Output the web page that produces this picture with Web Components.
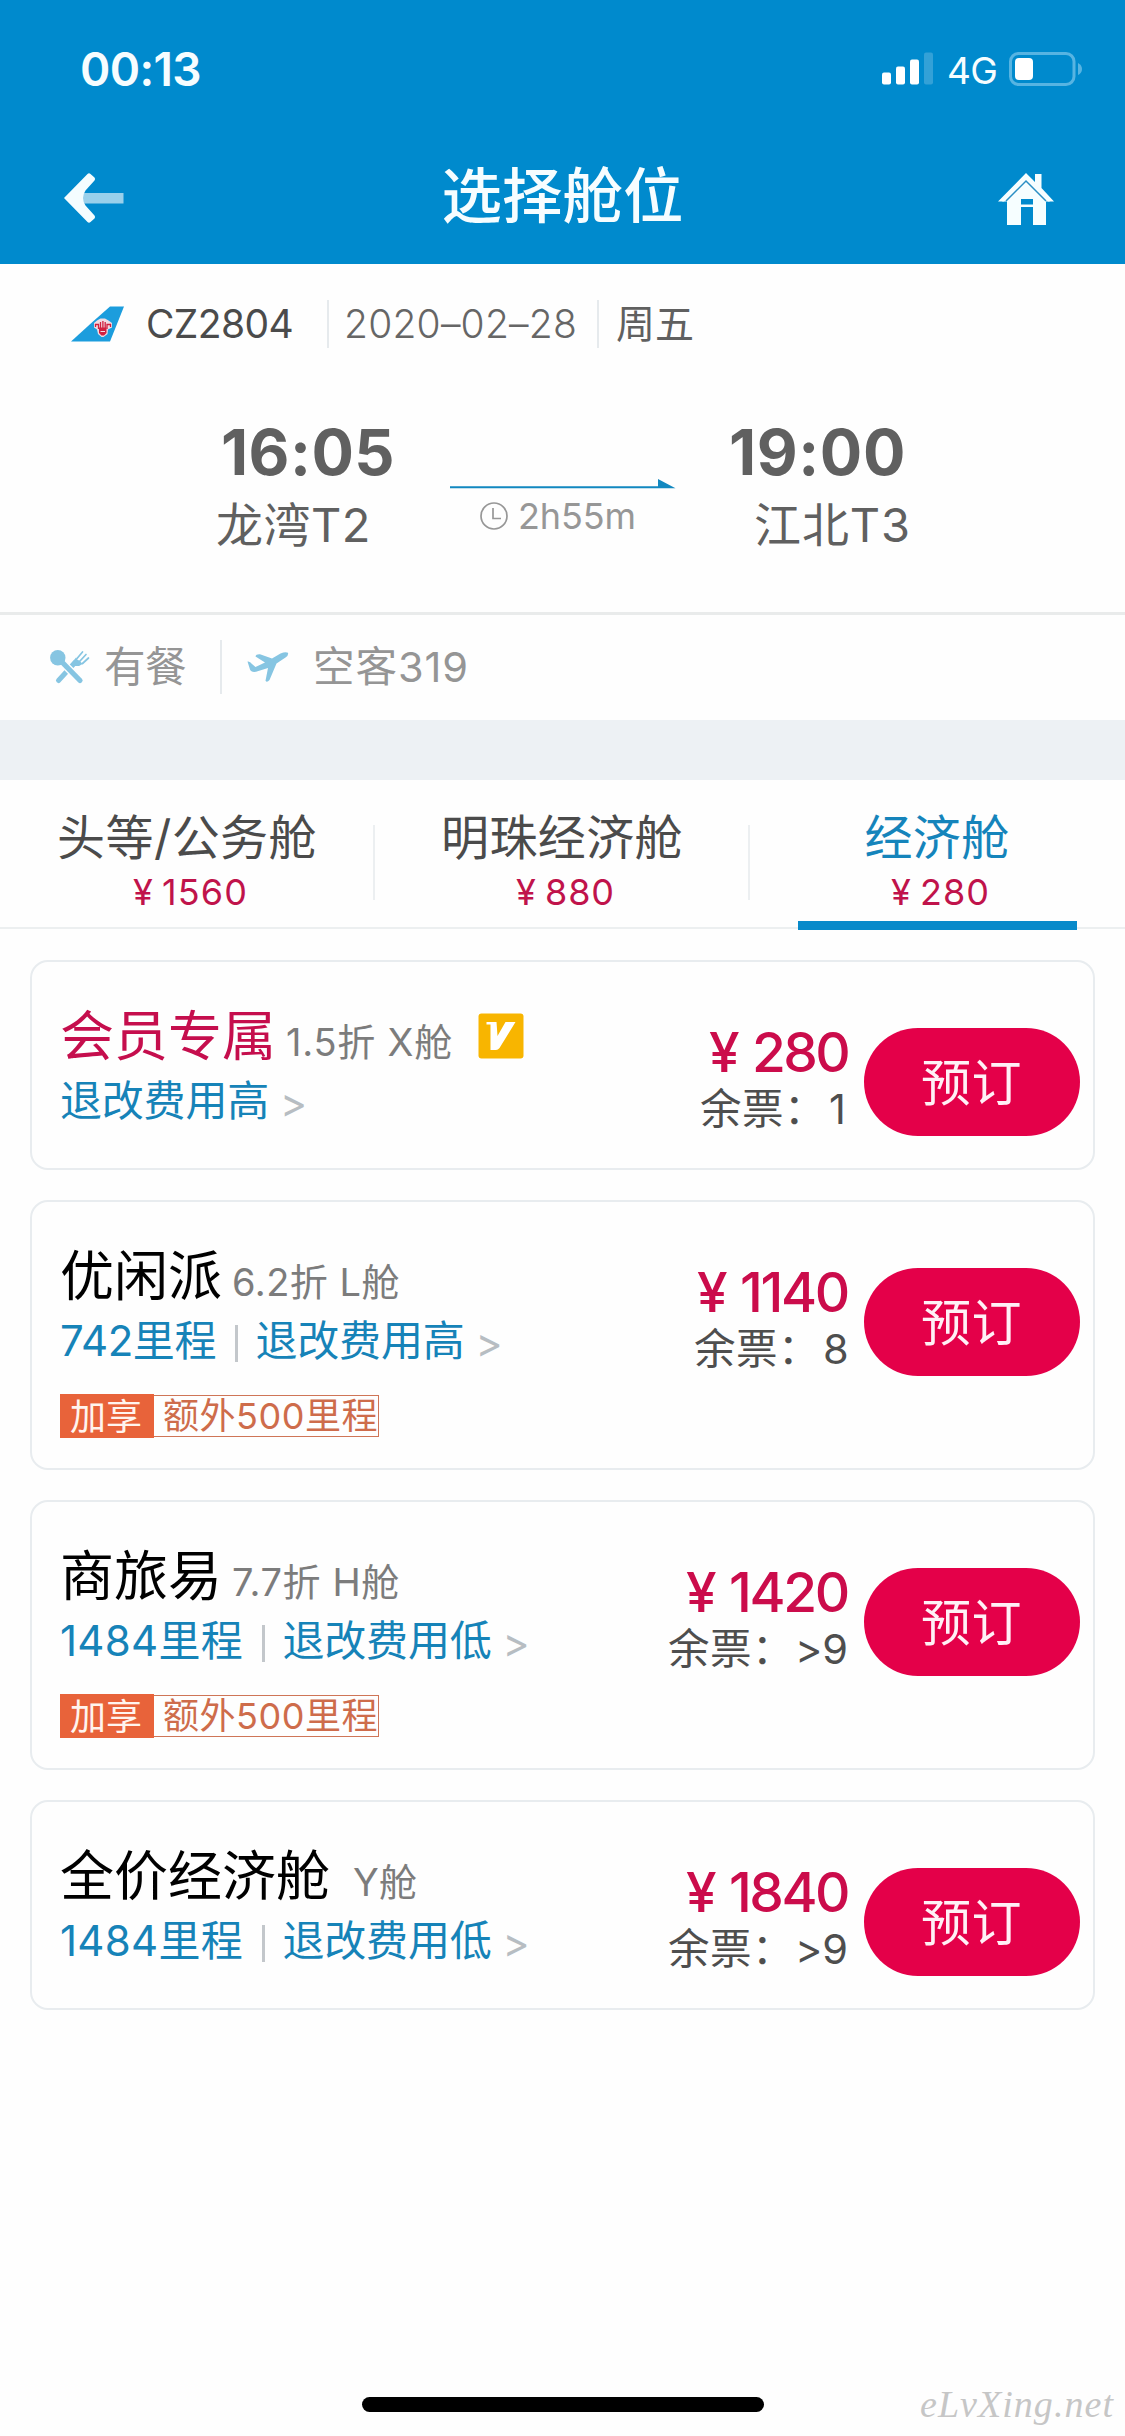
<!DOCTYPE html>
<html lang="zh-CN">
<head>
<meta charset="utf-8">
<meta name="viewport" content="width=1125">
<title>选择舱位</title>
<style>
  html, body { margin: 0; background: #fefefe; }
  body { width: 1125px; height: 2436px; overflow: hidden; font-family: Inter, "Noto Sans CJK SC", sans-serif; }
</style>
</head>
<body>
<cabin-page></cabin-page>
<script>
const define = (name, html, setup) => {
  const tpl = document.createElement('template');
  tpl.innerHTML = html;
  customElements.define(name, class extends HTMLElement {
    constructor() {
      super();
      this.attachShadow({ mode: 'open' }).appendChild(tpl.content.cloneNode(true));
    }
    connectedCallback() { if (setup && !this.ready) { this.ready = true; setup(this, this.shadowRoot); } }
  });
};

/* A single-line label that spreads its letters over the width given in "w". */
define('fit-label', `<style>:host{display:flex;flex:none} span{flex:none;white-space:pre}</style><span></span>`, (el, root) => {
  const s = root.querySelector('span');
  s.textContent = el.getAttribute('t');
  const w = +el.getAttribute('w');
  if (w) {
    const natural = s.getBoundingClientRect().width;
    s.style.letterSpacing = (w - natural) / [...s.textContent].length + 'px';
    el.style.width = w + 'px';
  }
});

const ICONS = {
  back: ['0 0 60 50', 60, 50, `<path d="M19 20H59.5V30.5H19Z" fill="#fff" fill-opacity=".6"/><path d="M0 25 23.500 1Q25-.4 26.500 1L30.500 4.600Q31.800 6 30.500 7.400L21.500 17.500Q16.500 25 21.500 32.500L30.500 42.600Q31.800 44 30.500 45.400L26.500 49Q25 50.400 23.500 49Z" fill="#f4fdff"/>`],
  home: ['0 0 58 54', 58, 54, `<g fill="#f6feff"><path d="M29 1 38 10V2H44.500V16L57 29.500H51L29 7.500 7 29.500H1Z"/><path d="M29 4.500 53 29.500H5Z"/><path d="M10 28 29 9 49 28V53H36V35H24V53H10Z"/></g><path d="M9 29 29 9 49 29" fill="none" stroke="#2b8fc4" stroke-width="1.500"/><path d="M24 27H36V32.500H24Z" fill="#008acd"/>`],
  signal: ['0 0 52 34', 52, 34, `<g fill="#fff"><rect y="20.500" width="9" height="12" rx="2"/><rect x="14" y="14.500" width="9" height="18" rx="2"/><rect x="28" y="7.500" width="9" height="25" rx="2"/><rect x="42" y=".5" width="9" height="32" rx="2" opacity=".2"/></g>`],
  battery: ['0 0 74 34', 74, 34, `<rect x="1.500" y="1.500" width="63.500" height="31" rx="8" fill="none" stroke="#57b4e2" stroke-width="3"/><rect x="6" y="6" width="18" height="22" rx="4" fill="#fff"/><path d="M69 11Q73 13 73 17T69 23Z" fill="#57b4e2"/>`],
  tail: ['0 0 54 36', 54, 36, `<path d="M0 35.500 22 15.500 39 .5H53L39 35.500Z" fill="#1c9ddd"/><path d="M23 17 26 14.500 29.500 12.500H34L37.500 14.500 41 17V21.500L37 23.500 36.500 28 32.500 31H30.500L27 28 26 23.500 23 21.500Z" fill="#f0dbe2"/><path d="M24.500 21V18.500H27.500V23M39.500 21V18.500H36V23M29.500 25V16M31.900 26V15M34.200 25V16" fill="none" stroke="#d2203f" stroke-width="1.300"/><path d="M28 21.500H35.500V27L33 29.500H30.500L28 27Z" fill="#d2203f"/><path d="M29.500 25.500H34" stroke="#f0dbe2"/>`],
  clock: ['0 0 28 28', 28, 28, `<g fill="none" stroke="#979797" stroke-width="1.700"><circle cx="14" cy="14" r="13"/><path d="M13 6V16.500H21"/></g>`],
  meal: ['0 0 40 34', 40, 34, `<g fill="none" stroke="#86c5e2" stroke-linecap="round"><path d="M8.500 30.500 25 12.500" stroke-width="5"/><path d="M27 8.500 32.500 2M30 11 36 4.500M32.500 13.500 38.500 8" stroke-width="1.700"/><path d="M22.500 12 26 7.500Q27 10 29.500 10.500 31 13 33.500 13.500L29 16 24.500 16Z" fill="#86c5e2" stroke="none"/><path d="M9 9 30 30.500" stroke="#fefefe" stroke-width="8"/><path d="M9 9 30 30.500" stroke-width="5.200"/></g><circle cx="7.800" cy="7.800" r="7.700" fill="#86c5e2"/>`],
  plane: ['0 0 42 30', 42, 30, `<path d="M.5 9.500Q3 9 5 12L8.500 15 18 10.500 8.500 4.500Q9 2 13 2.300L25 6.500 33.500 1.500Q38.500-.7 41 .7 41.700 3.500 38.500 5.500L29.500 11.500 22.500 28Q20 31 18.500 28.800L21 16 9 19.800Q4 20.500 3 17.500Z" fill="#86c5e2"/>`],
  arrow: ['0 0 226 10', 226, 10, `<path d="M0 7.200H208V0L225.500 9.200H0Z" fill="#1288c0"/>`],
  vip: ['0 0 46 46', 46, 46, `<rect x=".5" y=".5" width="45" height="45" rx="3" fill="#f8b500"/><path d="M8.500 9H18.500L19.500 23 27.500 9H37.500L21.500 35Q20 37 18 37H12.500V11.500H8.500Z" fill="#fff"/>`],
};
define('app-icon', `<style>:host{display:inline-block;flex:none} svg{display:block;overflow:visible}</style><svg></svg>`, (el, root) => {
  const [box, w, h, body] = ICONS[el.getAttribute('name')];
  const svg = root.querySelector('svg');
  svg.setAttribute('viewBox', box);
  svg.setAttribute('width', w);
  svg.setAttribute('height', h);
  svg.innerHTML = body;
});

define('status-bar', `
  <style>
    :host{display:flex;align-items:center;height:138px;padding:0 42px 0 80px;box-sizing:border-box;color:#f6fdff}
    .time{font-size:46px;font-weight:600;margin-right:auto}
    .net{font-size:37px;margin:2px 12px 0 13px}
  </style>
  <fit-label class="time" t="00:13" w="121"></fit-label>
  <app-icon name="signal"></app-icon>
  <fit-label class="net" t="4G" w="50"></fit-label>
  <app-icon name="battery"></app-icon>`);

define('nav-bar', `
  <style>
    :host{display:flex;justify-content:space-between;align-items:center;height:126px;padding:0 70px 0 64px;box-sizing:border-box;color:#f6fdff}
    .title{font-size:60.500px;font-weight:500;line-height:112px;height:112px;margin-left:4px;margin-bottom:11px}
    app-icon{margin-bottom:6px}
    app-icon:last-child{margin-bottom:4px}
  </style>
  <app-icon name="back"></app-icon>
  <fit-label class="title" t="选择舱位" w="242"></fit-label>
  <app-icon name="home"></app-icon>`);

define('v-rule', `<style>:host{display:block;flex:none;width:2px;background:#e6eaed}</style>`);

define('flight-summary', `
  <style>
    :host{display:block;height:348px;box-sizing:border-box;color:#606060}
    .meta{display:flex;align-items:center;height:48px;padding:36px 0 0 71px;font-size:39px;line-height:48px}
    .meta v-rule{height:48px}
    .no{color:#4b4b4b;margin:0 34px 0 21px}
    .date{font-weight:300;margin:0 20px 0 15px;color:#666}
    .day{margin-left:17px}
    .route{display:flex;padding:69px 0 0 216px;height:150px}
    .stop{display:flex;flex-direction:column}
    .clock{font-size:63px;line-height:70px;font-weight:650}
    .port{font-size:47px;line-height:60px;margin-top:8px}
    .from{width:234px} .from .clock{margin-left:5px}
    .mid{width:279px;padding-top:62px;display:flex;flex-direction:column}
    .to .port{margin-left:25px}
    .dur{display:flex;align-items:center;gap:10px;margin:7px 0 0 30px;font-size:36px;line-height:40px;color:#979797}
  </style>
  <div class="meta">
    <app-icon name="tail"></app-icon>
    <fit-label class="no" t="CZ2804" w="147"></fit-label>
    <v-rule></v-rule>
    <fit-label class="date" t="2020–02–28" w="233"></fit-label>
    <v-rule></v-rule>
    <fit-label class="day" t="周五" w="78"></fit-label>
  </div>
  <div class="route">
    <div class="stop from"><fit-label class="clock" t="16:05" w="174"></fit-label><fit-label class="port" t="龙湾T2" w="155"></fit-label></div>
    <div class="mid"><app-icon name="arrow"></app-icon>
      <div class="dur"><app-icon name="clock"></app-icon><fit-label t="2h55m" w="118"></fit-label></div></div>
    <div class="stop to"><fit-label class="clock" t="19:00" w="177"></fit-label><fit-label class="port" t="江北T3" w="157"></fit-label></div>
  </div>`);

define('aircraft-info', `
  <style>
    :host{display:flex;align-items:center;height:108px;box-sizing:border-box;padding:0 0 2px 50px;border-top:3px solid #e9ebeb;font-size:41.500px;line-height:50px;color:#959595}
    v-rule{height:54px;margin:0 25px 0 34px}
    .meal{margin-left:14px} .craft{margin-left:24px}
  </style>
  <app-icon name="meal"></app-icon><fit-label class="meal" t="有餐" w="82"></fit-label>
  <v-rule></v-rule>
  <app-icon name="plane"></app-icon><fit-label class="craft" t="空客319" w="156"></fit-label>`);

define('cabin-tab', `
  <style>
    :host{display:flex;flex-direction:column;align-items:center;position:relative;width:375px;height:149px;padding-top:28px;box-sizing:border-box;color:#4b4b4b}
    :host([active]){color:#1584bb}
    .name{font-size:48px;line-height:60px;margin-left:-1px}
    .price{display:flex;gap:7px;font-size:36px;line-height:44px;margin-top:2px;margin-left:6px;color:#c0134b}
    :host([active])::after{content:"";position:absolute;left:48px;top:141px;width:279px;height:9px;background:#088aca}
  </style>
  <div class="name"></div>
  <div class="price"></div>`, (el, root) => {
  const [name, w, price, pw] = el.getAttribute('data').split('|');
  root.querySelector('.name').innerHTML = `<fit-label t="${name}" w="${w}"></fit-label>`;
  root.querySelector('.price').innerHTML = `<fit-label t="¥" w="22"></fit-label><fit-label t="${price}" w="${pw}"></fit-label>`;
});

define('cabin-tabs', `
  <style>
    :host{display:flex;align-items:flex-start;height:149px;box-sizing:border-box;border-bottom:2px solid #eceff0}
    cabin-tab{flex:none}
    v-rule{height:75px;margin:45px 0 0 -2px;background:#eceff1}
  </style>
  <cabin-tab data="头等/公务舱|260|1560|86"></cabin-tab><v-rule></v-rule>
  <cabin-tab data="明珠经济舱|242|880|70"></cabin-tab><v-rule></v-rule>
  <cabin-tab active data="经济舱|145|280|70"></cabin-tab>`);

define('book-button', `
  <style>:host{display:flex;align-items:center;justify-content:center;flex:none;width:216px;height:108px;border-radius:54px;background:#e40049;color:#fff0f6;font-size:50px;line-height:60px;box-sizing:border-box;padding-top:2px}</style>
  <fit-label t="预订" w="101"></fit-label>`);

/* Fare card: data = name|width|discount+class|width|miles|width|rule|price|width|left|width */
customElements.define('fare-card', class extends HTMLElement {
  constructor() { super(); this.attachShadow({ mode: 'open' }); }
  connectedCallback() {
    const [name, nw, cls, cw, miles, mw, rule, price, pw, left, lw] = this.getAttribute('data').split('|');
    const vip = this.hasAttribute('vip'), bonus = this.hasAttribute('bonus');
    this.shadowRoot.innerHTML = `
    <style>
      :host{display:flex;height:${bonus ? 270 : 210}px;box-sizing:border-box;border:2.500px solid #e8ecef;border-radius:18px;background:#fefefe}
      .info{flex:1;padding:45px 0 0 28px;display:flex;flex-direction:column;align-items:flex-start}
      .head{display:flex;align-items:baseline;line-height:60px;height:60px}
      .name{font-size:54px;color:${vip ? '#c50e4d' : '#000'}}
      .cls{font-size:38px;color:#7c7c7c;margin-left:${cls.length < 3 ? 23 : 10}px}
      .head app-icon{align-self:center;margin:-2px 0 0 25px}
      .row{display:flex;align-items:center;height:50px;line-height:50px;font-size:42px;color:#1683b8;margin-top:9px}
      .row i{width:2.500px;height:37px;background:#c3c7cb;margin:4px 18px 0 19px}
      .gt{color:#b7bdc2;font-size:41px;margin:3px 0 0 11px}
      .tag{display:flex;align-items:center;height:44px;margin-top:28px;font-size:36px;line-height:40px;color:#ce6c4b}
      .tag b{font-weight:400;background:#e8633a;color:#fff4ee;height:44px;line-height:46px;padding:0 12px 0 10px;width:72px}
      .tag span{box-sizing:border-box;height:42px;width:225px;border:1.500px solid #cf7557;border-left:0;padding-left:9px;line-height:41px}
      .stock{display:flex;flex-direction:column;align-items:flex-end;padding-top:58px;margin-right:15.500px}
      .price{display:flex;gap:11px;font-size:55px;font-weight:500;line-height:64px;color:#cb0c4b}
      .left{display:flex;font-size:41.500px;line-height:50px;color:#4e4e4e}
      .left .word{margin-right:${left.length > 1 ? 1 : 3}px}
      book-button{margin:66px 13.500px 0 0}
    </style>
    <div class="info">
      <div class="head"><fit-label class="name" t="${name}" w="${nw}"></fit-label><fit-label class="cls" t="${cls}" w="${cw}"></fit-label>${vip ? '<app-icon name="vip"></app-icon>' : ''}</div>
      <div class="row">${miles ? `<fit-label t="${miles}" w="${mw}"></fit-label><i></i>` : ''}<fit-label t="${rule}" w="209"></fit-label><fit-label class="gt" t="&gt;" w="27"></fit-label></div>
      ${bonus ? '<div class="tag"><b><fit-label t="加享" w="72"></fit-label></b><span><fit-label t="额外500里程" w="215"></fit-label></span></div>' : ''}
    </div>
    <div class="stock">
      <div class="price"><fit-label t="¥" w="32"></fit-label><fit-label t="${price}" w="${pw}"></fit-label></div>
      <div class="left"><fit-label class="word" t="余票：" w="126"></fit-label><fit-label t="${left}" w="${lw}"></fit-label></div>
    </div>
    <book-button></book-button>`;
  }
});

define('home-indicator', `
  <style>
    :host{display:flex;align-items:center;height:60px;padding-left:362px}
    i{width:402px;height:15px;border-radius:8px;background:#000;margin-top:-3px}
    .mark{margin-left:156px;font:italic 38px/50px "Liberation Serif",serif;color:#c6c6c6;margin-top:-5px}
  </style>
  <i></i><fit-label class="mark" t="eLvXing.net" w="194"></fit-label>`);

define('cabin-page', `
  <style>
    :host{display:flex;flex-direction:column;width:1125px;height:2436px;background:#fefefe}
    header{height:264px;background:#008acd}
    .band{height:60px;background:#edf1f4}
    main{display:flex;flex-direction:column;gap:30px;padding:31px 30px 0;flex:1}
  </style>
  <header><status-bar></status-bar><nav-bar></nav-bar></header>
  <flight-summary></flight-summary>
  <aircraft-info></aircraft-info>
  <div class="band"></div>
  <cabin-tabs></cabin-tabs>
  <main>
    <fare-card vip data="会员专属|216|1.5折 X舱|167||0|退改费用高|280|96|1|19"></fare-card>
    <fare-card bonus data="优闲派|162|6.2折 L舱|168|742里程|156|退改费用高|1140|108|8|25"></fare-card>
    <fare-card bonus data="商旅易|162|7.7折 H舱|168|1484里程|183|退改费用低|1420|119|&gt;9|53"></fare-card>
    <fare-card data="全价经济舱|270|Y舱|64|1484里程|183|退改费用低|1840|119|&gt;9|53"></fare-card>
  </main>
  <home-indicator></home-indicator>`);
</script>
</body>
</html>
